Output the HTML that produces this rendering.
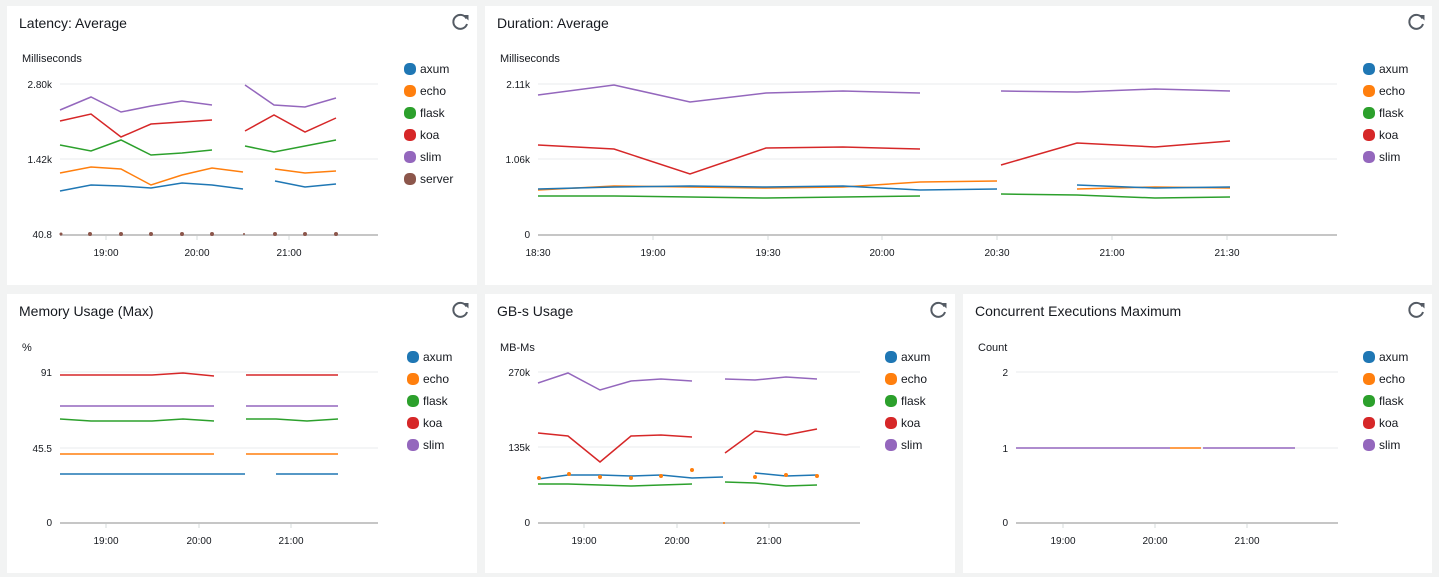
<!DOCTYPE html>
<html><head><meta charset="utf-8"><style>
html,body{margin:0;padding:0;background:#f2f3f3;}
svg{display:block;font-family:"Liberation Sans",Arial,sans-serif;}
.t{font-size:14px;fill:#16191f}
.u{font-size:11px;fill:#16191f}
.y{font-size:10px;fill:#16191f;text-anchor:end}
.x{font-size:10px;fill:#16191f;text-anchor:middle}
.l{font-size:12px;fill:#16191f}
.g{stroke:#e9ebed;stroke-width:1}
.a{stroke:#c6c6c6;stroke-width:2}
.tk{stroke:#d5dbdb;stroke-width:1}
polyline{fill:none;stroke-width:1.5}
</style></head><body>
<svg width="1439" height="577" viewBox="0 0 1439 577">
<defs>
<g id="rf"><path d="M6.5 -3.5 A7 7 0 1 0 7 2" fill="none" stroke="#545b64" stroke-width="2"/><path d="M3 -7 L8.5 -7 L8.5 -1.5 Z" fill="#545b64"/></g>
</defs>
<rect x="7" y="6" width="470" height="279" fill="#fff"/>
<rect x="485" y="6" width="947" height="279" fill="#fff"/>
<rect x="7" y="294" width="470" height="279" fill="#fff"/>
<rect x="485" y="294" width="470" height="279" fill="#fff"/>
<rect x="963" y="294" width="469" height="279" fill="#fff"/>
<use href="#rf" x="460" y="22"/><use href="#rf" x="1416" y="22"/><use href="#rf" x="460" y="310"/><use href="#rf" x="938" y="310"/><use href="#rf" x="1416" y="310"/>

<!-- Panel 1 -->
<text class="t" x="19" y="28">Latency: Average</text>
<text class="u" x="22" y="62">Milliseconds</text>
<line class="g" x1="60" y1="84" x2="378" y2="84"/><line class="g" x1="60" y1="159" x2="378" y2="159"/>
<line class="tk" x1="106" y1="234" x2="106" y2="240"/><line class="tk" x1="197" y1="234" x2="197" y2="240"/><line class="tk" x1="289" y1="234" x2="289" y2="240"/>
<line class="a" x1="60" y1="235" x2="378" y2="235"/>
<text class="y" x="52" y="88">2.80k</text><text class="y" x="52" y="163">1.42k</text><text class="y" x="52" y="238">40.8</text>
<text class="x" x="106" y="256">19:00</text><text class="x" x="197" y="256">20:00</text><text class="x" x="289" y="256">21:00</text>
<polyline stroke="#9467bd" points="60,110 91,97 121,112 151,106 182,101 212,105"/><polyline stroke="#9467bd" points="245,85 274,105 305,107 336,98"/>
<polyline stroke="#d62728" points="60,121 91,114 121,137 151,124 182,122 212,120"/><polyline stroke="#d62728" points="245,131 274,115 305,132 336,118"/>
<polyline stroke="#2ca02c" points="60,145 91,151 121,140 151,155 182,153 212,150"/><polyline stroke="#2ca02c" points="245,146 274,152 305,146 336,140"/>
<polyline stroke="#ff7f0e" points="60,173 91,167 121,169 151,185 182,175 212,168 243,172"/><polyline stroke="#ff7f0e" points="275,169 305,173 336,171"/>
<polyline stroke="#1f77b4" points="60,191 91,185 121,186 151,188 182,183 212,185 243,189"/><polyline stroke="#1f77b4" points="275,181 305,187 336,184"/>
<g fill="#8c564b"><circle cx="61" cy="234" r="1.5"/><circle cx="90" cy="234" r="2"/><circle cx="121" cy="234" r="2"/><circle cx="151" cy="234" r="2"/><circle cx="182" cy="234" r="2"/><circle cx="212" cy="234" r="2"/><circle cx="244" cy="234" r="1"/><circle cx="275" cy="234" r="2"/><circle cx="305" cy="234" r="2"/><circle cx="336" cy="234" r="2"/></g>
<g><rect x="404" y="63" width="12" height="12" rx="5" fill="#1f77b4"/><rect x="404" y="85" width="12" height="12" rx="5" fill="#ff7f0e"/><rect x="404" y="107" width="12" height="12" rx="5" fill="#2ca02c"/><rect x="404" y="129" width="12" height="12" rx="5" fill="#d62728"/><rect x="404" y="151" width="12" height="12" rx="5" fill="#9467bd"/><rect x="404" y="173" width="12" height="12" rx="5" fill="#8c564b"/>
<text class="l" x="420" y="73">axum</text><text class="l" x="420" y="95">echo</text><text class="l" x="420" y="117">flask</text><text class="l" x="420" y="139">koa</text><text class="l" x="420" y="161">slim</text><text class="l" x="420" y="183">server</text></g>

<!-- Panel 2 -->
<text class="t" x="497" y="28">Duration: Average</text>
<text class="u" x="500" y="62">Milliseconds</text>
<line class="g" x1="538" y1="84" x2="1337" y2="84"/><line class="g" x1="538" y1="159" x2="1337" y2="159"/>
<line class="tk" x1="653" y1="234" x2="653" y2="240"/><line class="tk" x1="768" y1="234" x2="768" y2="240"/><line class="tk" x1="882" y1="234" x2="882" y2="240"/><line class="tk" x1="997" y1="234" x2="997" y2="240"/><line class="tk" x1="1112" y1="234" x2="1112" y2="240"/><line class="tk" x1="1227" y1="234" x2="1227" y2="240"/>
<line class="a" x1="538" y1="235" x2="1337" y2="235"/>
<text class="y" x="530" y="88">2.11k</text><text class="y" x="530" y="163">1.06k</text><text class="y" x="530" y="238">0</text>
<text class="x" x="538" y="256">18:30</text><text class="x" x="653" y="256">19:00</text><text class="x" x="768" y="256">19:30</text><text class="x" x="882" y="256">20:00</text><text class="x" x="997" y="256">20:30</text><text class="x" x="1112" y="256">21:00</text><text class="x" x="1227" y="256">21:30</text>
<polyline stroke="#9467bd" points="538,95 614,85 690,102 766,93 843,91 920,93"/><polyline stroke="#9467bd" points="1001,91 1077,92 1155,89 1230,91"/>
<polyline stroke="#d62728" points="538,145 614,149 690,174 766,148 843,147 920,149"/><polyline stroke="#d62728" points="1001,165 1077,143 1155,147 1230,141"/>
<polyline stroke="#ff7f0e" points="538,190 614,186 690,187 766,188 843,187 920,182 997,181"/><polyline stroke="#ff7f0e" points="1077,189 1155,187 1230,188"/>
<polyline stroke="#1f77b4" points="538,189 614,187 690,186 766,187 843,186 920,190 997,189"/><polyline stroke="#1f77b4" points="1077,185 1155,188 1230,187"/>
<polyline stroke="#2ca02c" points="538,196 614,196 690,197 766,198 843,197 920,196"/><polyline stroke="#2ca02c" points="1001,194 1077,195 1155,198 1230,197"/>
<g><rect x="1363" y="63" width="12" height="12" rx="5" fill="#1f77b4"/><rect x="1363" y="85" width="12" height="12" rx="5" fill="#ff7f0e"/><rect x="1363" y="107" width="12" height="12" rx="5" fill="#2ca02c"/><rect x="1363" y="129" width="12" height="12" rx="5" fill="#d62728"/><rect x="1363" y="151" width="12" height="12" rx="5" fill="#9467bd"/>
<text class="l" x="1379" y="73">axum</text><text class="l" x="1379" y="95">echo</text><text class="l" x="1379" y="117">flask</text><text class="l" x="1379" y="139">koa</text><text class="l" x="1379" y="161">slim</text></g>

<!-- Panel 3 -->
<text class="t" x="19" y="316">Memory Usage (Max)</text>
<text class="u" x="22" y="351">%</text>
<line class="g" x1="60" y1="372" x2="378" y2="372"/><line class="g" x1="60" y1="448" x2="378" y2="448"/>
<line class="tk" x1="106" y1="522" x2="106" y2="528"/><line class="tk" x1="199" y1="522" x2="199" y2="528"/><line class="tk" x1="291" y1="522" x2="291" y2="528"/>
<line class="a" x1="60" y1="523" x2="378" y2="523"/>
<text class="y" x="52" y="376">91</text><text class="y" x="52" y="452">45.5</text><text class="y" x="52" y="526">0</text>
<text class="x" x="106" y="544">19:00</text><text class="x" x="199" y="544">20:00</text><text class="x" x="291" y="544">21:00</text>
<polyline stroke="#d62728" points="60,375 152,375 183,373 214,376"/><polyline stroke="#d62728" points="246,375 338,375"/>
<polyline stroke="#9467bd" points="60,406 214,406"/><polyline stroke="#9467bd" points="246,406 338,406"/>
<polyline stroke="#2ca02c" points="60,419 91,421 152,421 183,419 214,421"/><polyline stroke="#2ca02c" points="246,419 276,419 307,421 338,419"/>
<polyline stroke="#ff7f0e" points="60,454 214,454"/><polyline stroke="#ff7f0e" points="246,454 338,454"/>
<polyline stroke="#1f77b4" points="60,474 245,474"/><polyline stroke="#1f77b4" points="276,474 338,474"/>
<g><rect x="407" y="351" width="12" height="12" rx="5" fill="#1f77b4"/><rect x="407" y="373" width="12" height="12" rx="5" fill="#ff7f0e"/><rect x="407" y="395" width="12" height="12" rx="5" fill="#2ca02c"/><rect x="407" y="417" width="12" height="12" rx="5" fill="#d62728"/><rect x="407" y="439" width="12" height="12" rx="5" fill="#9467bd"/>
<text class="l" x="423" y="361">axum</text><text class="l" x="423" y="383">echo</text><text class="l" x="423" y="405">flask</text><text class="l" x="423" y="427">koa</text><text class="l" x="423" y="449">slim</text></g>

<!-- Panel 4 -->
<text class="t" x="497" y="316">GB-s Usage</text>
<text class="u" x="500" y="351">MB-Ms</text>
<line class="g" x1="538" y1="372" x2="860" y2="372"/><line class="g" x1="538" y1="447" x2="860" y2="447"/>
<line class="tk" x1="584" y1="522" x2="584" y2="528"/><line class="tk" x1="677" y1="522" x2="677" y2="528"/><line class="tk" x1="769" y1="522" x2="769" y2="528"/>
<line class="a" x1="538" y1="523" x2="860" y2="523"/>
<text class="y" x="530" y="376">270k</text><text class="y" x="530" y="451">135k</text><text class="y" x="530" y="526">0</text>
<text class="x" x="584" y="544">19:00</text><text class="x" x="677" y="544">20:00</text><text class="x" x="769" y="544">21:00</text>
<polyline stroke="#9467bd" points="538,383 568,373 600,390 631,381 661,379 692,381"/><polyline stroke="#9467bd" points="725,379 755,380 786,377 817,379"/>
<polyline stroke="#d62728" points="538,433 568,436 600,462 631,436 661,435 692,437"/><polyline stroke="#d62728" points="725,453 755,431 786,435 817,429"/>
<polyline stroke="#1f77b4" points="538,479 568,475 600,475 631,476 661,475 692,478 723,477"/><polyline stroke="#1f77b4" points="755,473 786,476 817,475"/>
<polyline stroke="#2ca02c" points="538,484 568,484 600,485 631,486 661,485 692,484"/><polyline stroke="#2ca02c" points="725,482 755,483 786,486 817,485"/>
<g fill="#ff7f0e"><circle cx="539" cy="478" r="2"/><circle cx="569" cy="474" r="2"/><circle cx="600" cy="477" r="2"/><circle cx="631" cy="478" r="2"/><circle cx="661" cy="476" r="2"/><circle cx="692" cy="470" r="2"/><circle cx="724" cy="523" r="1"/><circle cx="755" cy="477" r="2"/><circle cx="786" cy="475" r="2"/><circle cx="817" cy="476" r="2"/></g>
<g><rect x="885" y="351" width="12" height="12" rx="5" fill="#1f77b4"/><rect x="885" y="373" width="12" height="12" rx="5" fill="#ff7f0e"/><rect x="885" y="395" width="12" height="12" rx="5" fill="#2ca02c"/><rect x="885" y="417" width="12" height="12" rx="5" fill="#d62728"/><rect x="885" y="439" width="12" height="12" rx="5" fill="#9467bd"/>
<text class="l" x="901" y="361">axum</text><text class="l" x="901" y="383">echo</text><text class="l" x="901" y="405">flask</text><text class="l" x="901" y="427">koa</text><text class="l" x="901" y="449">slim</text></g>

<!-- Panel 5 -->
<text class="t" x="975" y="316">Concurrent Executions Maximum</text>
<text class="u" x="978" y="351">Count</text>
<line class="g" x1="1016" y1="372" x2="1338" y2="372"/><line class="g" x1="1016" y1="448" x2="1338" y2="448"/>
<line class="tk" x1="1063" y1="522" x2="1063" y2="528"/><line class="tk" x1="1155" y1="522" x2="1155" y2="528"/><line class="tk" x1="1247" y1="522" x2="1247" y2="528"/>
<line class="a" x1="1016" y1="523" x2="1338" y2="523"/>
<text class="y" x="1008" y="376">2</text><text class="y" x="1008" y="452">1</text><text class="y" x="1008" y="526">0</text>
<text class="x" x="1063" y="544">19:00</text><text class="x" x="1155" y="544">20:00</text><text class="x" x="1247" y="544">21:00</text>
<polyline stroke="#ff7f0e" points="1170,448 1201,448"/>
<polyline stroke="#9467bd" points="1016,448 1170,448"/><polyline stroke="#9467bd" points="1203,448 1295,448"/>
<g><rect x="1363" y="351" width="12" height="12" rx="5" fill="#1f77b4"/><rect x="1363" y="373" width="12" height="12" rx="5" fill="#ff7f0e"/><rect x="1363" y="395" width="12" height="12" rx="5" fill="#2ca02c"/><rect x="1363" y="417" width="12" height="12" rx="5" fill="#d62728"/><rect x="1363" y="439" width="12" height="12" rx="5" fill="#9467bd"/>
<text class="l" x="1379" y="361">axum</text><text class="l" x="1379" y="383">echo</text><text class="l" x="1379" y="405">flask</text><text class="l" x="1379" y="427">koa</text><text class="l" x="1379" y="449">slim</text></g>
</svg>
</body></html>
